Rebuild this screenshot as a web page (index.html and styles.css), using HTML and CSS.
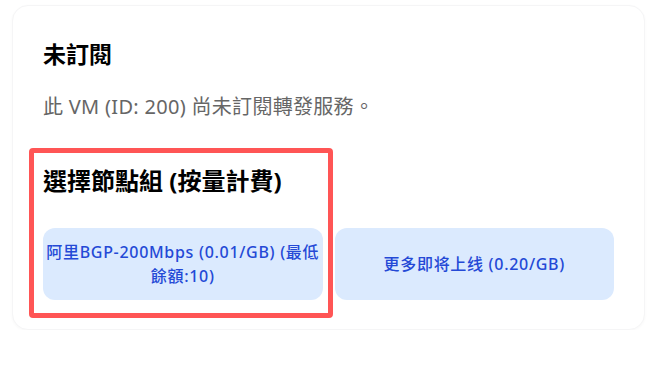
FILE: index.html
```html
<!DOCTYPE html>
<html lang="zh-Hant">
<head>
<meta charset="utf-8">
<title>未訂閱</title>
<link rel="stylesheet" href="styles.css">
</head>
<body>
<div class="page">
  <div class="card">
    <h2 class="title">未訂閱</h2>
    <p class="desc">此 VM (ID: 200) 尚未訂閱轉發服務。</p>
    <h3 class="section-title">選擇節點組 (按量計費)</h3>
    <div class="options">
      <button class="option">阿里BGP-200Mbps (0.01/GB) (最低餘額:10)</button>
      <button class="option">更多即将上线 (0.20/GB)</button>
    </div>
    <div class="highlight"></div>
  </div>
</div>
</body>
</html>
```

FILE: styles.css
```css
html, body {
  margin: 0;
  padding: 0;
  background: #ffffff;
}
body {
  font-family: "Noto Sans", "Noto Sans CJK TC", sans-serif;
}
.page {
  padding: 5px 3px 0 12px;
}
.card {
  position: relative;
  box-sizing: border-box;
  width: 633px;
  border: 1px solid #f5f5f6;
  border-radius: 16px;
  box-shadow: 0 1px 3px rgba(0, 0, 0, 0.03);
  padding: 34px 30px 29px 30px;
  background: #fff;
}
.title {
  margin: 0;
  font-size: 23px;
  line-height: 28px;
  font-weight: 700;
  color: #000;
}
.desc {
  margin: 25px 0 0 0;
  font-size: 20px;
  line-height: 28px;
  letter-spacing: 0.3px;
  color: #666;
}
.section-title {
  margin: 44px 0 0 0;
  font-size: 24px;
  line-height: 32px;
  font-weight: 700;
  color: #000;
}
.options {
  display: grid;
  grid-template-columns: 1fr 1fr;
  column-gap: 12px;
  margin-top: 31px;
}
.option {
  font-family: "Noto Sans", "Noto Sans CJK TC", sans-serif;
  border: none;
  background: #dbeafe;
  color: #2449d6;
  font-size: 16px;
  line-height: 24px;
  font-weight: 500;
  letter-spacing: 0.7px;
  border-radius: 12px;
  padding: 12px 0;
  text-align: center;
}
.highlight {
  position: absolute;
  left: 16px;
  top: 142px;
  width: 304px;
  height: 170px;
  box-sizing: border-box;
  border: 5px solid #ff5555;
  border-radius: 4px;
  pointer-events: none;
}
```
